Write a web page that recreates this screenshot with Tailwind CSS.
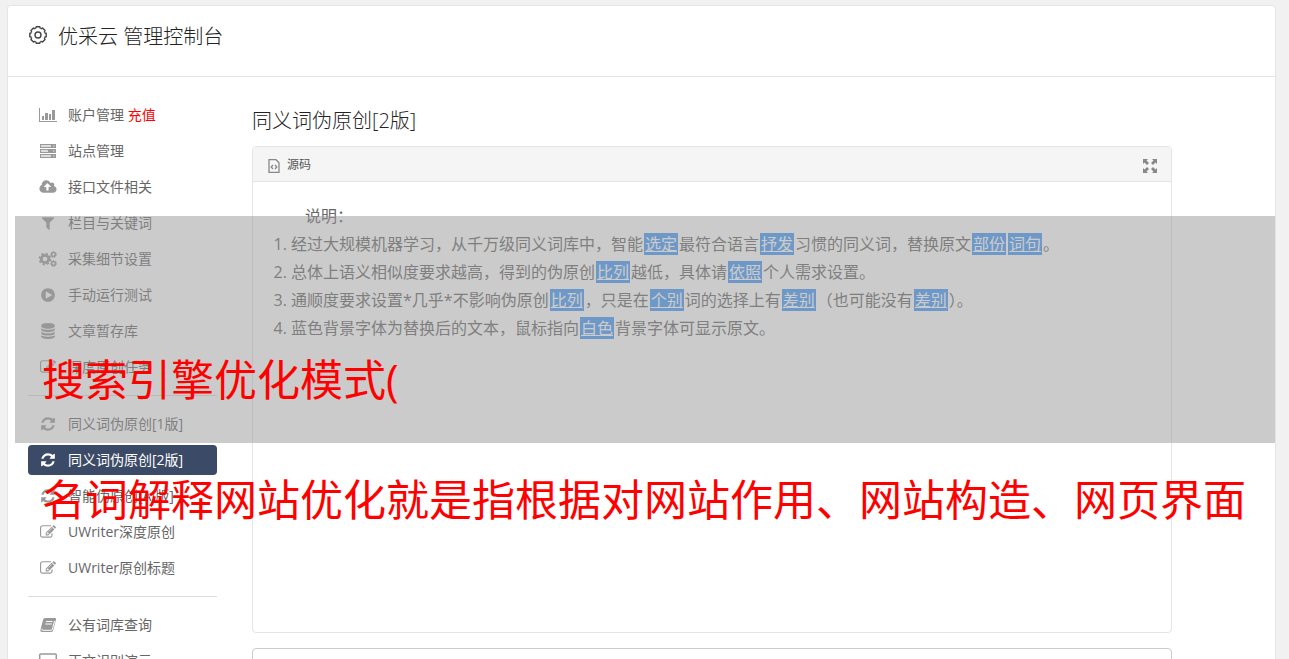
<!DOCTYPE html>
<html lang="zh-CN">
<head>
    <meta charset="UTF-8">
    <meta name="viewport" content="width=device-width, initial-scale=1.0">
    <title>优采云 管理控制台</title>
    <script src="https://cdn.jsdelivr.net/npm/@tailwindcss/browser@4"></script>
</head>
<body class="relative h-screen overflow-hidden bg-[#f1f1f1] px-[7px] pt-[5px] font-['Open_Sans','Noto_Sans_CJK_SC',sans-serif] text-[#666]">

    <!-- Shared icons -->
    <svg class="hidden">
        <symbol id="i-refresh" viewBox="0 0 1792 1792"><path d="M1639 1056q0 5-1 7-64 268-268 434.5t-478 166.5q-146 0-282.5-55t-243.5-157l-129 129q-19 19-45 19t-45-19-19-45v-448q0-26 19-45t45-19h448q26 0 45 19t19 45-19 45l-137 137q71 66 161 102t187 36q134 0 250-65t186-179q11-17 53-117 8-23 30-23h192q13 0 22.5 9.5t9.5 22.5zm25-800v448q0 26-19 45t-45 19h-448q-26 0-45-19t-19-45 19-45l138-138q-148-137-349-137-134 0-250 65t-186 179q-11 17-53 117-8 23-30 23h-199q-13 0-22.5-9.5t-9.5-22.5v-7q65-268 270-434.5t480-166.5q146 0 284 55.5t245 156.5l130-129q19-19 45-19t45 19 19 45z"/></symbol>
        <symbol id="i-edit" viewBox="0 0 1792 1792"><path d="M888 1184l116-116-152-152-116 116v56h96v96h56zm440-720q-16-16-33 1l-350 350q-17 17-1 33t33-1l350-350q17-17 1-33zm80 594v190q0 119-84.5 203.5t-203.5 84.5h-832q-119 0-203.5-84.5t-84.5-203.5v-832q0-119 84.5-203.5t203.5-84.5h832q63 0 117 25 15 7 18 23 3 17-9 29l-49 49q-14 14-32 8-23-6-45-6h-832q-66 0-113 47t-47 113v832q0 66 47 113t113 47h832q66 0 113-47t47-113v-126q0-13 9-22l64-64q15-15 35-7t20 29zm-96-738l288 288-672 672h-288v-288zm444 132l-92 92-288-288 92-92q28-28 68-28t68 28l152 152q28 28 28 68t-28 68z"/></symbol>
    </svg>

    <div class="mr-[6px] h-full rounded-t border border-b-0 border-[#e5e5e5] bg-white">
        <header class="flex h-[71px] items-center gap-[10px] border-b border-[#e5e5e5] px-5 pb-2">
            <svg class="mb-1 size-5" viewBox="0 0 20 20" fill="none" stroke="#444" stroke-width="1.4" stroke-linejoin="round">
                <g transform="translate(10 10)">
                    <path id="tooth" d="M6.5-2.7Q7-1.8 8.2-1.8V1.8Q7 1.8 6.5 2.7"/>
                    <use href="#tooth" transform="rotate(45)"/>
                    <use href="#tooth" transform="rotate(90)"/>
                    <use href="#tooth" transform="rotate(135)"/>
                    <use href="#tooth" transform="rotate(180)"/>
                    <use href="#tooth" transform="rotate(225)"/>
                    <use href="#tooth" transform="rotate(270)"/>
                    <use href="#tooth" transform="rotate(315)"/>
                    <circle r="3"/>
                </g>
            </svg>
            <h1 class="text-xl font-light text-[#222]">优采云 管理控制台</h1>
        </header>

        <div class="flex items-start gap-[35px] pl-5 pr-[103px] pt-[23px]">
            <nav class="flex w-[189px] shrink-0 flex-col gap-[6px] text-sm">
                <a href="#" class="flex h-[30px] items-center gap-[10px] pl-[10px]">
                    <svg class="h-4 w-5" viewBox="0 0 20 16" fill="#999"><path d="M1 1h1v13h17v1H1zM4 9h2v4H4zM7 6h3v7H7zM11 7h2v6h-2zM14 3h3v10h-3z"/></svg>
                    <span>账户管理 <span class="text-[#f00]">充值</span></span>
                </a>
                <a href="#" class="flex h-[30px] items-center gap-[10px] pl-[10px]">
                    <svg class="h-4 w-5" viewBox="0 0 20 16"><path fill="#999" d="M2 1h16v4H2zM2 6h16v4H2zM2 11h16v4H2z"/><path fill="#ddd" d="M3 2h10v2H3zM3 7h7v2H3zM3 12h10v2H3zM15 2.5h1.5v1H15zM15 7.5h1.5v1H15zM15 12.5h1.5v1H15z"/></svg>
                    <span>站点管理</span>
                </a>
                <a href="#" class="flex h-[30px] items-center gap-[10px] pl-[10px]">
                    <svg class="h-4 w-5" viewBox="0 0 1920 1792" fill="#999"><path d="M1280 864q0-14-9-23l-352-352q-9-9-23-9t-23 9l-351 351q-10 12-10 24 0 14 9 23t23 9h224v352q0 13 9.500 22.500t22.500 9.500h192q13 0 22.500-9.500t9.500-22.500v-352h224q13 0 22.500-9.500t9.500-22.500zm640 288q0 159-112.500 271.500t-271.500 112.500h-1088q-185 0-316.500-131.500t-131.500-316.500q0-130 70-240t188-165q-2-30-2-43 0-212 150-362t362-150q156 0 285.500 87t188.500 231q71-62 166-62 106 0 181 75t75 181q0 76-41 138 130 31 213.500 135.500t83.500 238.500z"/></svg>
                    <span>接口文件相关</span>
                </a>
                <a href="#" class="flex h-[30px] items-center gap-[10px] pl-[10px]">
                    <svg class="h-4 w-5" viewBox="0 0 1792 1792" fill="#999"><path d="M1595 295q17 41-14 70l-493 493v742q0 42-39 59-13 5-25 5-27 0-45-19l-256-256q-19-19-19-45v-486l-493-493q-31-29-14-70 17-39 59-39h1280q42 0 59 39z"/></svg>
                    <span>栏目与关键词</span>
                </a>
                <a href="#" class="flex h-[30px] items-center gap-[10px] pl-[10px]">
                    <svg class="h-4 w-5" viewBox="0 0 20 16" fill="none" stroke="#999">
                        <circle cx="7" cy="8" r="3.700" stroke-width="2.800"/>
                        <circle cx="7" cy="8" r="5.500" stroke-width="1.800" stroke-dasharray="2.160"/>
                        <circle cx="15.500" cy="3.500" r="1.900" stroke-width="1.500"/>
                        <circle cx="15.500" cy="3.500" r="2.900" stroke-width="1" stroke-dasharray="1.300"/>
                        <circle cx="15.500" cy="12.500" r="1.900" stroke-width="1.500"/>
                        <circle cx="15.500" cy="12.500" r="2.900" stroke-width="1" stroke-dasharray="1.300"/>
                    </svg>
                    <span>采集细节设置</span>
                </a>
                <a href="#" class="flex h-[30px] items-center gap-[10px] pl-[10px]">
                    <svg class="h-4 w-5" viewBox="0 0 1792 1792" fill="#999"><path d="M896 128q209 0 385.500 103t279.500 279.500 103 385.500-103 385.500-279.500 279.500-385.500 103-385.500-103-279.500-279.500-103-385.500 103-385.500 279.500-279.500 385.500-103zm384 823q32-18 32-55t-32-55l-544-320q-31-19-64-1-32 19-32 56v640q0 37 32 56 16 8 32 8 17 0 32-9z"/></svg>
                    <span>手动运行测试</span>
                </a>
                <a href="#" class="flex h-[30px] items-center gap-[10px] pl-[10px]">
                    <svg class="h-4 w-5" viewBox="0 0 1792 1792" fill="#999"><path d="M896 768q237 0 443-43t325-127v170q0 69-103 128t-280 93.500-385 34.500-385-34.500-280-93.500-103-128v-170q119 84 325 127t443 43zm0 768q237 0 443-43t325-127v170q0 69-103 128t-280 93.500-385 34.500-385-34.500-280-93.500-103-128v-170q119 84 325 127t443 43zm0-384q237 0 443-43t325-127v170q0 69-103 128t-280 93.500-385 34.500-385-34.500-280-93.500-103-128v-170q119 84 325 127t443 43zm0-1152q208 0 385 34.500t280 93.500 103 128v128q0 69-103 128t-280 93.500-385 34.500-385-34.500-280-93.500-103-128v-128q0-69 103-128t280-93.500 385-34.500z"/></svg>
                    <span>文章暂存库</span>
                </a>
                <a href="#" class="flex h-[30px] items-center gap-[10px] pl-[10px]">
                    <svg class="h-4 w-5 fill-[#999]"><use href="#i-edit"/></svg>
                    <span>深度原创任务</span>
                </a>

                <hr class="my-[7px] border-[#ddd]">

                <a href="#" class="flex h-[30px] items-center gap-[10px] pl-[10px]">
                    <svg class="h-4 w-5 fill-[#999]"><use href="#i-refresh"/></svg>
                    <span>同义词伪原创[1版]</span>
                </a>
                <a href="#" class="flex h-[30px] items-center gap-[10px] rounded bg-[#3b4a66] pl-[10px] text-white">
                    <svg class="h-4 w-5 fill-white"><use href="#i-refresh"/></svg>
                    <span>同义词伪原创[2版]</span>
                </a>
                <a href="#" class="flex h-[30px] items-center gap-[10px] pl-[10px]">
                    <svg class="h-4 w-5 fill-[#999]"><use href="#i-refresh"/></svg>
                    <span>智能伪原创[AI版]</span>
                </a>
                <a href="#" class="flex h-[30px] items-center gap-[10px] pl-[10px]">
                    <svg class="h-4 w-5 fill-[#999]"><use href="#i-edit"/></svg>
                    <span>UWriter深度原创</span>
                </a>
                <a href="#" class="flex h-[30px] items-center gap-[10px] pl-[10px]">
                    <svg class="h-4 w-5 fill-[#999]"><use href="#i-edit"/></svg>
                    <span>UWriter原创标题</span>
                </a>

                <hr class="my-[7px] border-[#ddd]">

                <a href="#" class="flex h-[30px] items-center gap-[10px] pl-[10px]">
                    <svg class="h-4 w-5" viewBox="0 0 20 16"><path fill="#999" d="M7 1h10q1.500 0 1 1.500L15.200 13q-.5 2-2 2H4q-2 0-1.500-2.500L5 3q.5-2 2-2z"/><path fill="none" stroke="#fff" d="M8 4.500h6.500M7.300 7h6.500M4 11.700q-.6 1.600.6 1.600H13q1 0 1.400-1.300L16.500 4"/></svg>
                    <span>公有词库查询</span>
                </a>
                <a href="#" class="flex h-[30px] items-center gap-[10px] pl-[10px]">
                    <svg class="h-4 w-5" viewBox="0 0 20 16" fill="none" stroke="#999" stroke-width="1.500"><rect x="1.700" y="1" width="16.600" height="11" rx="1"/><path d="M6 15h8"/></svg>
                    <span>正文识别演示</span>
                </a>
            </nav>

            <main class="min-w-0 flex-1">
                <h2 class="mb-[11px] mt-[7px] text-xl font-light leading-7 text-[#222]">同义词伪原创[2版]</h2>

                <section class="rounded border border-[#e5e5e5]">
                    <div class="flex h-[35px] items-center justify-between rounded-t border-b border-[#e5e5e5] bg-[#f5f5f5] px-[14px]">
                        <div class="flex items-center gap-[6px] pt-[2px] text-xs text-[#555]">
                            <svg class="mt-[2px] h-[14px] w-[14px]" viewBox="0 0 14 14" fill="none" stroke="#888" stroke-width="1.300"><path d="M2 .7h7l3 3v9.600H2zM6 6L4.200 8 6 10M8 6l1.800 2L8 10"/></svg>
                            <span>源码</span>
                        </div>
                        <button type="button" aria-label="全屏" class="mt-1">
                            <svg class="size-[14px]" viewBox="0 0 14 14" fill="#888"><path d="M0 0h5L3.500 1.500 6 4 4 6 1.500 3.500 0 5zM14 0v5l-1.500-1.500L10 6 8 4l2.500-2.500L9 0zM0 14V9l1.500 1.500L4 8l2 2-2.500 2.500L5 14zM14 14H9l1.500-1.500L8 10l2-2 2.500 2.500L14 9z"/></svg>
                        </button>
                    </div>
                    <div class="min-h-[450px] p-5 leading-7">
                        <p class="indent-8">说明：</p>
                        <ol class="list-decimal pl-[18px]">
                            <li>经过大规模机器学习，从千万级同义词库中，智能<u class="mx-px bg-[#4399f6] px-px text-white">选定</u>最符合语言<u class="mx-px bg-[#4399f6] px-px text-white">抒发</u>习惯的同义词，替换原文<u class="mx-px bg-[#4399f6] px-px text-white">部份</u><u class="mx-px bg-[#4399f6] px-px text-white">词句</u>。</li>
                            <li>总体上语义相似度要求越高，得到的伪原创<u class="mx-px bg-[#4399f6] px-px text-white">比列</u>越低，具体请<u class="mx-px bg-[#4399f6] px-px text-white">依照</u>个人需求设置。</li>
                            <li>通顺度要求设置*几乎*不影响伪原创<u class="mx-px bg-[#4399f6] px-px text-white">比列</u>，只是在<u class="mx-px bg-[#4399f6] px-px text-white">个别</u>词的选择上有<u class="mx-px bg-[#4399f6] px-px text-white">差别</u>（也可能没有<u class="mx-px bg-[#4399f6] px-px text-white">差别</u>）。</li>
                            <li>蓝色背景字体为替换后的文本，鼠标指向<u class="mx-px bg-[#4399f6] px-px text-white">白色</u>背景字体可显示原文。</li>
                        </ol>
                    </div>
                </section>

                <section class="mt-[15px] h-10 rounded border border-[#ccc]"></section>
            </main>
        </div>
    </div>

    <!-- Caption over the page -->
    <div class="absolute left-[15px] right-[14px] top-[216px] h-[227px] bg-[#979797]/50 pl-[27px] pt-[104px]">
        <p class="whitespace-nowrap text-[43px] leading-[120px] text-[#f00]">搜索引擎优化模式(<br>名词解释网站优化就是指根据对网站作用、网站构造、网页界面</p>
    </div>
</body>
</html>
